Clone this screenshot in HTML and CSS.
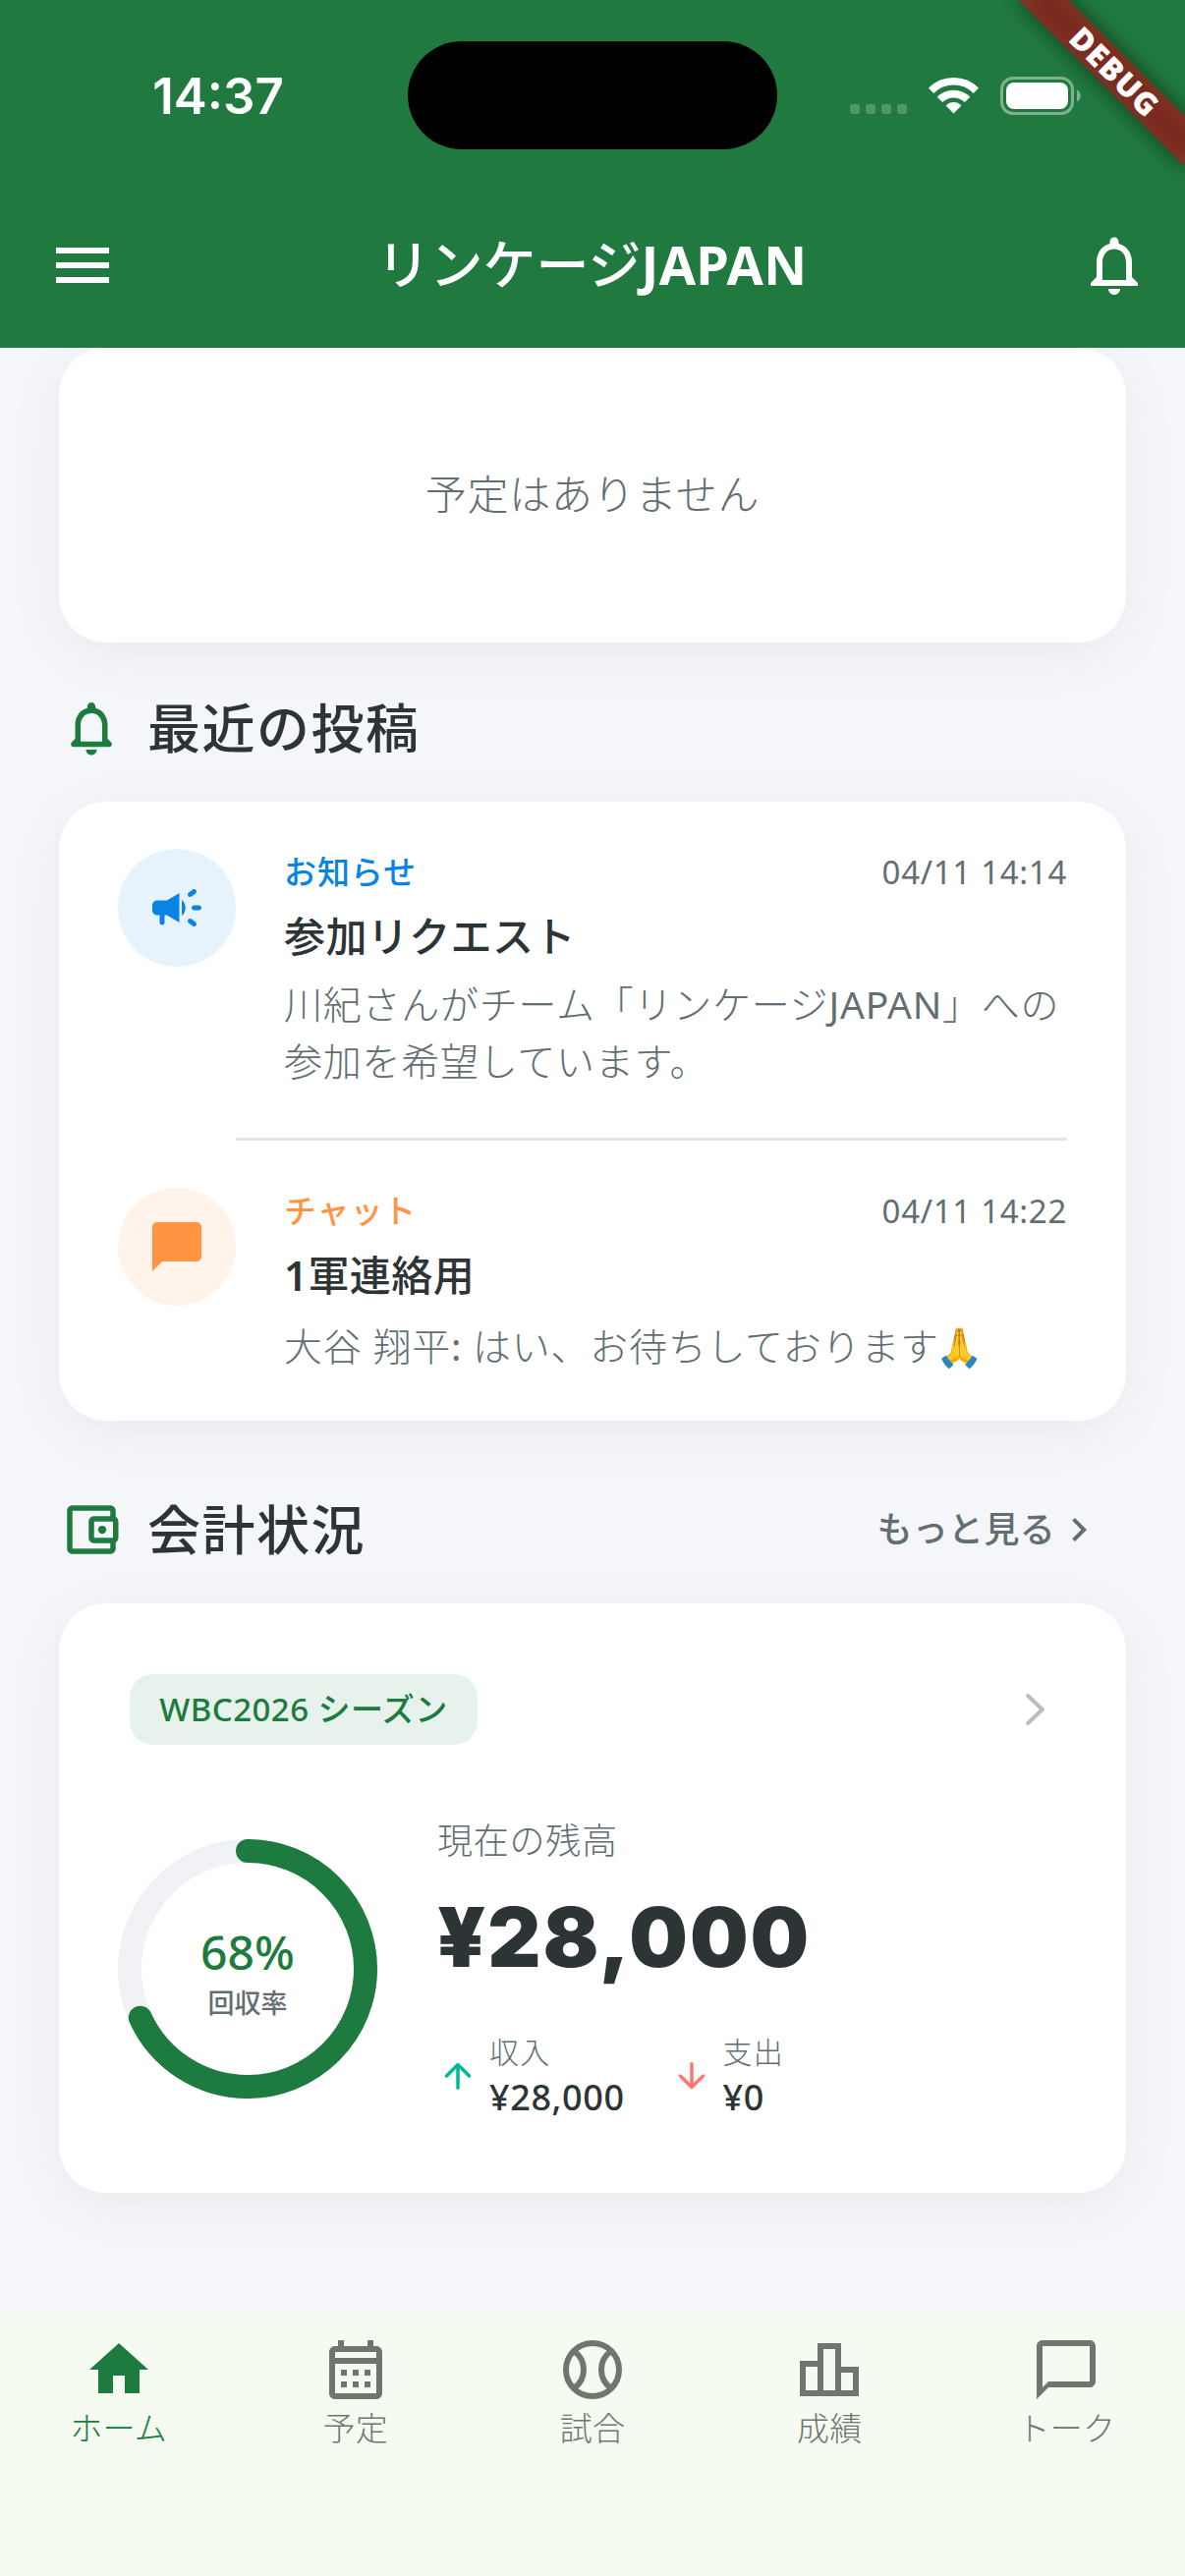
FILE: index.html
```html
<!DOCTYPE html>
<html lang="ja">
<head>
<meta charset="utf-8">
<title>リンケージJAPAN</title>
<link rel="stylesheet" href="styles.css">
</head>
<body>
<div class="app">
  <header class="header">
    <div class="status">
      <div class="clock">14:37</div>
      <div class="island"></div>
      <div class="indicators">
        <div class="cell"><i></i><i></i><i></i><i></i></div>
        <svg class="wifi" viewBox="0 0 51 38"><g fill="none" stroke="#fff" stroke-width="7.6"><path d="M2.6 14.2A32.5 32.5 0 0 1 48.4 14.2"/><path d="M11.4 23.4A20 20 0 0 1 39.6 23.4"/></g><path fill="#fff" d="M25.5 37.6L17.6 29.4A11 11 0 0 1 33.4 29.4Z"/></svg>
        <svg class="battery" viewBox="0 0 82 39"><rect x="1.5" y="1.5" width="72" height="36" rx="11.5" fill="none" stroke="#fff" stroke-opacity=".42" stroke-width="3"/><rect x="6" y="6" width="63" height="27" rx="8" fill="#fff"/><path d="M78 13.5c5 2 5 10 0 12z" fill="#fff" fill-opacity=".42"/></svg>
      </div>
    </div>
    <div class="appbar">
      <svg class="i72" viewBox="0 0 24 24"><path d="M3 18h18v-2H3v2zm0-5h18v-2H3v2zm0-7v2h18V6H3z"/></svg>
      <h1 class="title">リンケージ<span>JAPAN</span></h1>
      <svg class="i72" viewBox="0 0 24 24"><path d="M12 22c1.1 0 2-.9 2-2h-4c0 1.1.89 2 2 2zm6-6v-5c0-3.07-1.64-5.64-4.5-6.32V4c0-.83-.67-1.5-1.5-1.5s-1.5.67-1.5 1.5v.68C7.63 5.36 6 7.92 6 11v5l-2 2v1h16v-1l-2-2zm-2 1H8v-6c0-2.48 1.51-4.5 4-4.5s4 2.02 4 4.5v6z"/></svg>
    </div>
  </header>

  <main class="content">
    <section class="card empty">予定はありません</section>

    <div class="section-head first">
      <svg class="i66" viewBox="0 0 24 24"><path d="M19.29 17.29L18 16v-5c0-3.07-1.63-5.64-4.5-6.32V4c0-.83-.67-1.5-1.5-1.5s-1.5.67-1.5 1.5v.68C7.64 5.36 6 7.92 6 11v5l-1.29 1.29c-.63.63-.19 1.71.7 1.71h13.17c.9 0 1.34-1.08.71-1.71zM16 17H8v-6c0-2.48 1.51-4.5 4-4.5s4 2.02 4 4.5v6zm-4 5c1.1 0 2-.9 2-2h-4c0 1.1.89 2 2 2z"/></svg>
      <h2>最近の投稿</h2>
    </div>

    <section class="card posts">
      <article class="post">
        <div class="avatar notice"><svg class="i60" viewBox="0 0 24 24"><path d="M18 12c0 .55.45 1 1 1h2c.55 0 1-.45 1-1s-.45-1-1-1h-2c-.55 0-1 .45-1 1zM16.59 16.82c-.33.44-.24 1.05.2 1.37.53.39 1.09.81 1.62 1.21.44.33 1.06.24 1.38-.2 0-.01.01-.01.01-.02.33-.44.24-1.06-.2-1.38-.53-.4-1.09-.82-1.61-1.21-.44-.33-1.06-.23-1.39.21 0 .01-.01.02-.01.02zM19.81 4.81c0-.01-.01-.01-.01-.02-.33-.44-.95-.53-1.38-.2-.53.4-1.1.82-1.62 1.22-.44.33-.52.95-.19 1.38 0 .01.01.01.01.02.33.44.94.53 1.38.2.53-.39 1.09-.82 1.62-1.22.43-.32.51-.94.19-1.38zM8 9H4c-1.1 0-2 .9-2 2v2c0 1.1.9 2 2 2h1v3c0 .55.45 1 1 1s1-.45 1-1v-3h1l5 3V6L8 9zM15.5 12c0-1.33-.58-2.53-1.5-3.35v6.69c.92-.81 1.5-2.01 1.5-3.34z"/></svg></div>
        <div class="post-body">
          <div class="meta"><span class="tag blue">お知らせ</span><time>04/11 14:14</time></div>
          <h3>参加リクエスト</h3>
          <p>川紀さんがチーム「リンケージ<span class="latin">JAPAN</span>」への<br>参加を希望しています。</p>
        </div>
      </article>
      <hr>
      <article class="post">
        <div class="avatar chat"><svg class="i60" viewBox="0 0 24 24"><path d="M20 2H4c-1.1 0-2 .9-2 2v18l4-4h14c1.1 0 2-.9 2-2V4c0-1.1-.9-2-2-2z"/></svg></div>
        <div class="post-body">
          <div class="meta"><span class="tag orange">チャット</span><time>04/11 14:22</time></div>
          <h3><b>1</b>軍連絡用</h3>
          <p class="with-emoji">大谷 翔平<span class="latin">:</span> はい、お待ちしております<span class="emoji">🙏</span></p>
        </div>
      </article>
    </section>

    <div class="section-head second">
      <svg class="i66" viewBox="0 0 24 24"><path d="M21 7.28V5c0-1.1-.9-2-2-2H5c-1.11 0-2 .9-2 2v14c0 1.1.89 2 2 2h14c1.1 0 2-.9 2-2v-2.28c.59-.35 1-.98 1-1.72V9c0-.74-.41-1.37-1-1.72zM20 9v6h-7V9h7zM5 19V5h14v2h-6c-1.1 0-2 .9-2 2v6c0 1.1.9 2 2 2h6v2H5z"/><circle cx="16" cy="12" r="1.5"/></svg>
      <h2>会計状況</h2>
      <a class="more">もっと見る<svg class="i48" viewBox="0 0 24 24"><path d="M10 6L8.59 7.41 13.17 12l-4.58 4.59L10 18l6-6z"/></svg></a>
    </div>

    <section class="card account">
      <div class="account-top">
        <span class="pill">WBC2026 シーズン</span>
        <svg class="i72" viewBox="0 0 24 24"><path d="M9.7 7.3L14.6 12l-4.9 4.7" fill="none" stroke="currentColor" stroke-width="1.4" stroke-linecap="round" stroke-linejoin="round"/></svg>
      </div>
      <div class="account-main">
        <div class="ring">
          <svg viewBox="0 0 264 264"><circle class="track" cx="132" cy="132" r="120"/><circle class="value" cx="132" cy="132" r="120" pathLength="100" stroke-dasharray="68.2 100" transform="rotate(-90 132 132)"/></svg>
          <div class="ring-label"><b>68%</b><span>回収率</span></div>
        </div>
        <div class="figures">
          <div class="caption">現在の残高</div>
          <div class="balance">¥28,000</div>
          <div class="flows">
            <div class="flow">
              <svg class="i42 up" viewBox="0 0 24 24"><path d="M13 19V7.83l4.88 4.88c.39.39 1.03.39 1.42 0 .39-.39.39-1.02 0-1.41l-6.59-6.59c-.39-.39-1.02-.39-1.41 0l-6.6 6.58c-.39.39-.39 1.02 0 1.41.39.39 1.02.39 1.41 0L11 7.83V19c0 .55.45 1 1 1s1-.45 1-1z"/></svg>
              <div><span>収入</span><b>¥28,000</b></div>
            </div>
            <div class="flow">
              <svg class="i42 down" viewBox="0 0 24 24"><path d="M11 5v11.17l-4.88-4.88c-.39-.39-1.03-.39-1.42 0-.39.39-.39 1.02 0 1.41l6.59 6.59c.39.39 1.02.39 1.41 0l6.59-6.59c.39-.39.39-1.02 0-1.41-.39-.39-1.02-.39-1.41 0L13 16.17V5c0-.55-.45-1-1-1s-1 .45-1 1z"/></svg>
              <div><span>支出</span><b>¥0</b></div>
            </div>
          </div>
        </div>
      </div>
    </section>
  </main>

  <nav class="nav">
    <a class="active"><svg class="i72" viewBox="0 0 24 24"><path d="M10 20v-6h4v6h5v-8h3L12 3 2 12h3v8z"/></svg>ホーム</a>
    <a><svg class="i72" viewBox="0 0 24 24"><path d="M19 4h-1V2h-2v2H8V2H6v2H5c-1.11 0-1.99.9-1.99 2L3 20c0 1.1.89 2 2 2h14c1.1 0 2-.9 2-2V6c0-1.1-.9-2-2-2zm0 16H5V10h14v10zm0-12H5V6h14v2zM9 14H7v-2h2v2zm4 0h-2v-2h2v2zm4 0h-2v-2h2v2zm-8 4H7v-2h2v2zm4 0h-2v-2h2v2zm4 0h-2v-2h2v2z"/></svg>予定</a>
    <a><svg class="i72" viewBox="0 0 24 24"><g fill="none" stroke="currentColor" stroke-width="2"><circle cx="12" cy="12" r="9"/><path d="M5.7 5.7C8 7.3 9 9.6 9 12s-1 4.7-3.3 6.3M18.3 5.7C16 7.3 15 9.6 15 12s1 4.7 3.3 6.3"/></g></svg>試合</a>
    <a><svg class="i72" viewBox="0 0 24 24"><path d="M16 11V3H8v6H2v12h20V11h-6zm-6-6h4v14h-4V5zm-6 6h4v8H4v-8zm16 8h-4v-6h4v6z"/></svg>成績</a>
    <a><svg class="i72" viewBox="0 0 24 24"><path d="M20 2H4c-1.1 0-2 .9-2 2v18l4-4h14c1.1 0 2-.9 2-2V4c0-1.1-.9-2-2-2zm0 14H6l-2 2V4h16v12z"/></svg>トーク</a>
  </nav>

  <div class="banner"><span>DEBUG</span></div>
</div>
</body>
</html>
```
FILE: styles.css
```css
* { box-sizing: border-box; margin: 0; padding: 0; }
body { background: #f5f6fa; }
svg { display: block; flex: none; fill: currentColor; }
.i72 { width: 72px; height: 72px; }
.i66 { width: 66px; height: 66px; }
.i60 { width: 60px; height: 60px; }
.i48 { width: 48px; height: 48px; }
.i42 { width: 42px; height: 42px; }
.latin { font-weight: 400; }

.app {
  position: relative;
  width: 1206px;
  height: 2622px;
  overflow: hidden;
  display: flex;
  flex-direction: column;
  background: #f5f6fa;
  color: #2d3436;
  font-family: "Noto Sans", "Noto Sans CJK JP", sans-serif;
}

/* Header */
.header { height: 354px; flex: none; background: #20793f; color: #fff; z-index: 1; }
.status { height: 186px; padding-top: 42px; display: flex; align-items: flex-start; }
.clock { width: 415px; padding-left: 29px; text-align: center; font: 600 51px/112px Inter, sans-serif; }
.island { width: 376px; height: 110px; border-radius: 55px; background: #000; }
.indicators { height: 110px; margin-left: 74px; display: flex; align-items: center; }
.cell { display: flex; gap: 6px; margin: 28px 22px 0 0; }
.cell i { width: 10px; height: 10px; border-radius: 3px; background: rgba(255,255,255,.22); }
.wifi { width: 51px; height: 38px; margin-right: 22px; }
.battery { width: 82px; height: 39px; }
.appbar { height: 168px; padding: 0 36px 0 48px; display: flex; align-items: center; justify-content: space-between; }
.title { margin-right: 13px; padding-bottom: 3px; font-size: 54px; line-height: 72px; font-weight: 500; }
.title span { font-weight: 700; letter-spacing: .3px; }

/* Content */
.content { flex: 1; padding: 0 60px; min-height: 0; }
.card { background: #fff; border-radius: 48px; box-shadow: 0 12px 60px rgba(0,0,0,.05); }
.empty { height: 300px; padding-bottom: 8px; display: flex; align-items: center; justify-content: center; font-size: 42px; letter-spacing: .75px; font-weight: 300; color: #636e72; }
.section-head { display: flex; align-items: center; color: #1d7b3f; }
.section-head h2 { margin-left: 24px; font-size: 54px; line-height: 72px; font-weight: 500; letter-spacing: 1.5px; color: #2d3436; }
.first { height: 162px; padding-top: 12px; }
.second { height: 186px; padding-top: 36px; }
.section-head .more { margin-left: auto; margin-right: 24px; display: flex; align-items: center; font-size: 36px; line-height: 54px; letter-spacing: .3px; font-weight: 500; color: #636e72; }

.post { display: flex; gap: 49px; padding: 48px 60px; }
.avatar { width: 120px; height: 120px; flex: none; border-radius: 50%; display: flex; align-items: center; justify-content: center; }
.notice { background: #e6f2fc; color: #0984e3; }
.chat { background: #fff3ea; color: #ff9543; }
.post-body { flex: 1; }
.meta { display: flex; justify-content: space-between; font-size: 33px; line-height: 48px; }
.tag { font-weight: 500; letter-spacing: .9px; }
.blue { color: #0984e3; }
.orange { color: #ff9543; }
.meta time { color: #636e72; letter-spacing: .7px; }
.post h3 { margin: 12px 0; font-size: 42px; line-height: 57px; font-weight: 500; letter-spacing: .4px; }
.post h3 b { font-weight: 600; }
.post p { font-size: 39px; line-height: 57.5px; height: 117px; letter-spacing: .75px; font-weight: 300; color: #636e72; white-space: nowrap; }
.post .with-emoji { height: 60px; padding-top: 3px; }
.emoji { margin-left: -4px; }
.posts { height: 630px; }
.posts hr { height: 3px; border: 0; margin: 0 60px 0 180px; background: #dfe6e9; }

/* Account card */
.account { height: 600px; padding: 72px 57px 0 60px; }
.account-top { display: flex; align-items: center; justify-content: space-between; padding-left: 12px; }
.account-top svg { color: #bdbdbd; }
.pill { width: 354px; height: 72px; border-radius: 24px; background: #e8f2ec; color: #1d7b3f; text-align: center; font-size: 33px; line-height: 71px; font-weight: 500; letter-spacing: .45px; white-space: nowrap; }
.account-main { display: flex; gap: 61px; padding-top: 71px; }
.ring { position: relative; width: 264px; height: 264px; margin-top: 25px; }
.ring svg { width: 264px; height: 264px; fill: none; stroke-width: 24; }
.track { stroke: #f1f2f6; }
.value { stroke: #1d7b3f; stroke-linecap: round; }
.ring-label { position: absolute; inset: 0; display: flex; flex-direction: column; align-items: center; padding-top: 82px; }
.ring-label b { font-size: 48px; line-height: 65px; font-weight: 550; color: #1d7b3f; }
.ring-label span { font-size: 27px; line-height: 40px; font-weight: 500; color: #636e72; }
.caption { font-size: 36px; line-height: 54px; letter-spacing: .75px; font-weight: 300; color: #636e72; }
.balance { font: 900 84px/102px Inter, sans-serif; letter-spacing: 1.9px; margin-top: 20px; }
.flows { display: flex; gap: 47px; margin-top: 44px; }
.flow { display: flex; align-items: center; gap: 11px; }
.flow span { display: block; font-size: 30px; line-height: 44px; letter-spacing: 1.2px; font-weight: 300; color: #636e72; }
.flow b { display: block; font-size: 36px; line-height: 48px; font-weight: 550; letter-spacing: .6px; }
.up { color: #00b894; }
.down { color: #ff7675; }

/* Bottom navigation */
.nav { height: 270px; flex: none; background: #f5fbf1; display: grid; grid-template-columns: repeat(5, 1fr); padding-top: 24px; z-index: 1; }
.nav a { display: flex; flex-direction: column; align-items: center; color: #72756f; font-size: 33px; line-height: 48px; font-weight: 300; letter-spacing: .3px; }
.nav .active { color: #1d7b3f; }

/* Corner ribbon */
.banner { position: absolute; z-index: 2; left: 1014px; top: 54px; width: 240px; height: 36px; transform: rotate(45deg); color: #fff; }
.banner::before, .banner::after { content: ""; position: absolute; inset: 0; background: rgba(0,0,0,.5); filter: blur(11px); }
.banner::after { background: rgba(183,28,28,.63); filter: none; left: -20px; right: -20px; }
.banner span { position: absolute; inset: 0; z-index: 1; padding-left: 2px; text-align: center; font-size: 31.5px; line-height: 35px; font-weight: 900; letter-spacing: 1px; }
```
